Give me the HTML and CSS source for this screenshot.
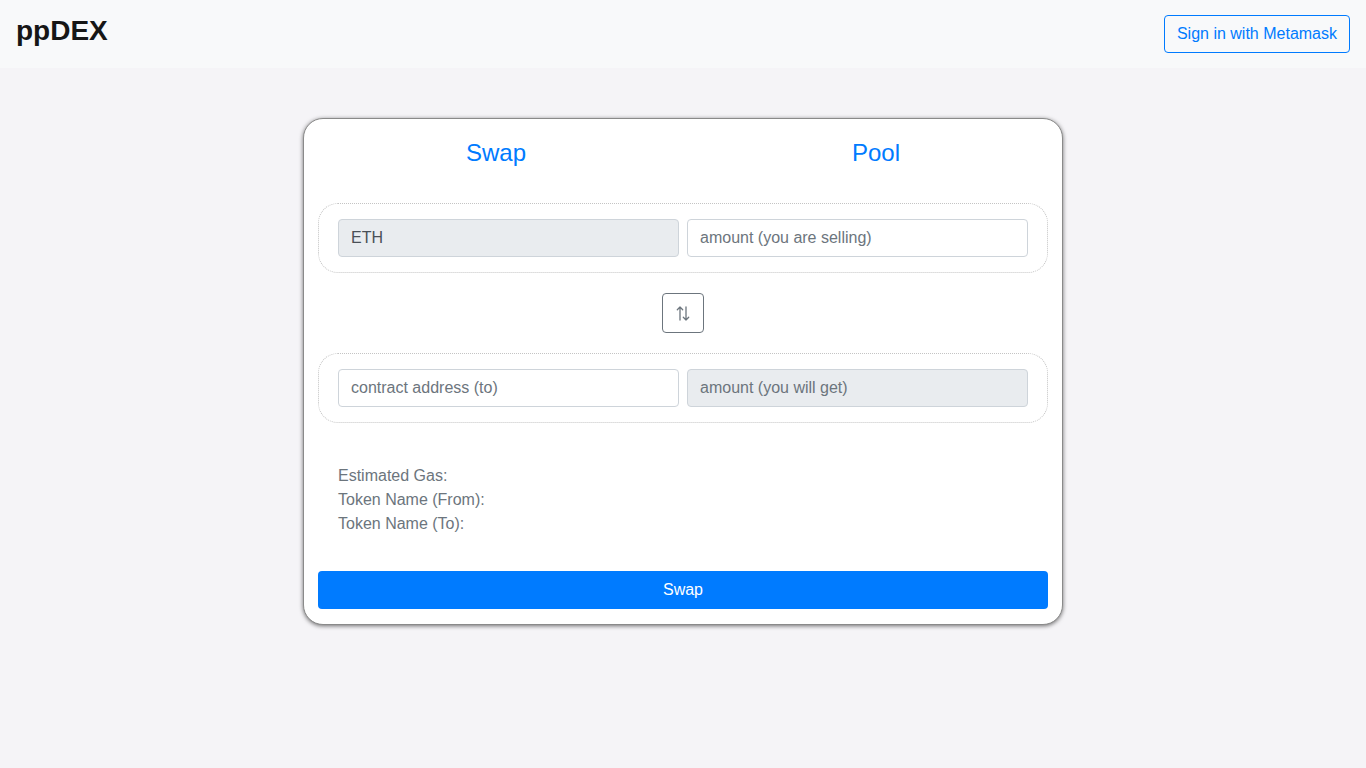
FILE: index.html
```html
<!DOCTYPE html>
<html lang="en">
<head>
<meta charset="utf-8">
<title>ppDEX</title>
<link rel="stylesheet" href="styles.css">
</head>
<body>
<header class="navbar">
  <div class="brand">ppDEX</div>
  <button class="btn-outline">Sign in with Metamask</button>
</header>
<main class="main">
  <section class="card">
    <nav class="tabs">
      <a class="tab">Swap</a>
      <a class="tab">Pool</a>
    </nav>
    <div class="group">
      <input class="field field-ro" value="ETH" readonly>
      <input class="field" placeholder="amount (you are selling)">
    </div>
    <div class="toggle-row">
      <button class="toggle" aria-label="switch">
        <svg width="16" height="17" viewBox="0 0 16 17" fill="none" stroke="#6c757d" stroke-width="1.3" stroke-linecap="round" stroke-linejoin="round">
          <path d="M5 15V2M2.3 4.7L5 2l2.7 2.7"/>
          <path d="M11 2v13M8.3 12.3L11 15l2.7-2.7"/>
        </svg>
      </button>
    </div>
    <div class="group">
      <input class="field" placeholder="contract address (to)">
      <input class="field field-ro" placeholder="amount (you will get)" readonly>
    </div>
    <div class="info">
      <div>Estimated Gas:</div>
      <div>Token Name (From):</div>
      <div>Token Name (To):</div>
    </div>
    <button class="btn-primary">Swap</button>
  </section>
</main>
</body>
</html>
```
FILE: styles.css
```css
* { box-sizing: border-box; }
html, body { margin: 0; padding: 0; }
body {
  background: #f5f4f7;
  font-family: "Liberation Sans", Arial, sans-serif;
  font-size: 16px;
  color: #212529;
  min-height: 768px;
}
.navbar {
  height: 68px;
  background: #f8f9fa;
  display: flex;
  align-items: center;
  justify-content: space-between;
  padding: 0 16px;
}
.brand {
  font-size: 28px;
  font-weight: bold;
  color: #161616;
  margin-top: -6px;
}
.btn-outline {
  font-family: inherit;
  font-size: 16px;
  color: #007bff;
  background: transparent;
  border: 1px solid #007bff;
  border-radius: 4px;
  height: 38px;
  padding: 0 12px;
  margin-top: 0;
}
.main {
  display: flex;
  justify-content: center;
  padding-top: 50px;
}
.card {
  width: 760px;
  background: #fff;
  border-radius: 20px;
  border: 1px solid #8a8a8a;
  box-shadow: 0 1px 4px rgba(0,0,0,0.55);
  padding: 0 14px 15px;
}
.tabs {
  display: flex;
  height: 84px;
  align-items: center;
  margin: 0 -18px 0 -14px;
  padding: 0 0 16px 2px;
}
.tab {
  flex: 1;
  text-align: center;
  color: #007bff;
  font-size: 24px;
}
.group {
  border: 1px dotted #c4c4c4;
  border-radius: 20px;
  padding: 15px 19px;
  display: flex;
  gap: 8px;
}
.field {
  flex: 1;
  min-width: 0;
  height: 38px;
  border: 1px solid #ced4da;
  border-radius: 4px;
  padding: 0 12px;
  font-family: inherit;
  font-size: 16px;
  color: #495057;
  background: #fff;
}
.field::placeholder { color: #6c757d; }
.field-ro { background: #e9ecef; }
.toggle-row {
  display: flex;
  justify-content: center;
  padding: 20px 0;
}
.toggle {
  width: 42px;
  height: 40px;
  border: 1px solid #6c757d;
  border-radius: 4px;
  background: #fff;
  display: flex;
  align-items: center;
  justify-content: center;
  padding: 0;
}
.info {
  padding: 41px 20px 35px;
  color: #6c757d;
  line-height: 24px;
}
.btn-primary {
  width: 100%;
  height: 38px;
  background: #007bff;
  color: #fff;
  border: none;
  border-radius: 4px;
  font-family: inherit;
  font-size: 16px;
}
```
